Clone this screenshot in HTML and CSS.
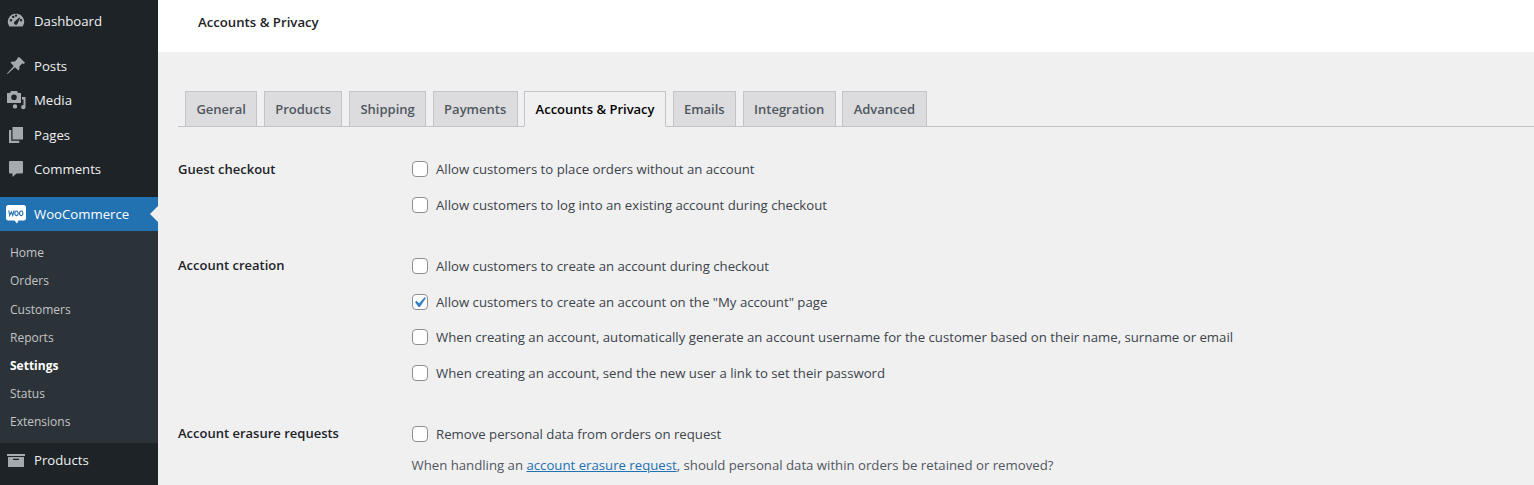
FILE: index.html
```html
<!DOCTYPE html>
<html lang="en">
<head>
    <meta charset="UTF-8">
    <meta name="viewport" content="width=device-width, initial-scale=1.0">
    <title>Accounts &amp; Privacy</title>
    <link rel="stylesheet" href="styles.css">
</head>
<body>
    <div class="page">
        <!-- Admin menu -->
        <nav class="sidebar">
            <a class="menu-item dashboard">
                <svg class="menu-icon" viewBox="0 0 20 20"><path fill-rule="evenodd" d="M9 2.800a8 8 0 0 0-6.600 12.700h13.200A8 8 0 0 0 9 2.800zM4 10.400a1.200 1.200 0 1 1 0-2.400 1.200 1.200 0 0 1 0 2.400zm2.200-3.300a1.200 1.200 0 1 1 0-2.400 1.200 1.200 0 0 1 0 2.400zM9 5.800a1.200 1.200 0 1 1 0-2.400 1.200 1.200 0 0 1 0 2.400zm1.200 7.500a1.900 1.900 0 0 1-3-2.200l5-4.600.9.600zm3.800-2.900a1.200 1.200 0 1 1 0-2.400 1.200 1.200 0 0 1 0 2.400z"/></svg>
                <span>Dashboard</span>
            </a>
            <a class="menu-item">
                <svg class="menu-icon" viewBox="0 0 20 20"><path d="M12.500 1.300l5.500 5.500-1.300 1.200-1.200-.7-3.200 3.200c.5 1.700.1 3.100-.9 4.100L8 11.200.5 18l-.5-.5L6.800 10 3.400 6.600c1-1 2.400-1.400 4.100-.9l3.200-3.200-.4-1.100z"/></svg>
                <span>Posts</span>
            </a>
            <a class="menu-item">
                <svg class="menu-icon" viewBox="0 0 20 20"><path fill-rule="evenodd" d="M0 3h3l1-2h6l1 2h3v10H0zm7 1.500a2.800 2.800 0 1 0 0 5.600 2.800 2.800 0 0 0 0-5.600z"/><path d="M15 7h3.500v10a2.200 2.200 0 1 1-2-2.100V9.500H15zM8 14.200a2.200 2.200 0 1 1 0 4.400 2.200 2.200 0 0 1 0-4.400z"/></svg>
                <span>Media</span>
            </a>
            <a class="menu-item">
                <svg class="menu-icon" viewBox="0 0 20 20"><path d="M5.500 2H16v12.500H5.500zM2 5h2.300v10.700h8V18H2z"/></svg>
                <span>Pages</span>
            </a>
            <a class="menu-item">
                <svg class="menu-icon" viewBox="0 0 20 20"><path d="M3 2h12a1 1 0 0 1 1 1v10.500a1 1 0 0 1-1 1H9.500L5.500 18v-3.500H3a1 1 0 0 1-1-1V3a1 1 0 0 1 1-1z"/></svg>
                <span>Comments</span>
            </a>
            <a class="menu-item current">
                <svg class="woo-icon" viewBox="0 0 20 20">
                    <path class="woo-bubble" d="M2.500 1h15A2.500 2.500 0 0 1 20 3.500v10.500a2.500 2.500 0 0 1-2.500 2.500h-5l-1.500 3-2.500-3H2.500A2.500 2.500 0 0 1 0 14V3.500A2.500 2.500 0 0 1 2.500 1z"/>
                    <path class="woo-mark" d="M2.800 6.500l.9 5 1.600-3.600 1.400 3.600 1.300-5M10.500 7a1.700 2.300 0 1 0 .01 0M15.200 7a1.700 2.300 0 1 0 .01 0"/>
                </svg>
                <span>WooCommerce</span>
            </a>
            <ul class="submenu">
                <li>Home</li>
                <li>Orders</li>
                <li>Customers</li>
                <li>Reports</li>
                <li class="active">Settings</li>
                <li>Status</li>
                <li>Extensions</li>
            </ul>
            <a class="menu-item products">
                <svg class="menu-icon" viewBox="0 0 20 20"><path fill-rule="evenodd" d="M0 4h18v2H0zM1 7h16v10H1zM6 8.700v1.300h6V8.700z"/></svg>
                <span>Products</span>
            </a>
        </nav>

        <div class="main">
            <header class="topbar">Accounts &amp; Privacy</header>

            <div class="content">
                <!-- Settings tabs -->
                <div class="tabs">
                    <a class="tab">General</a>
                    <a class="tab">Products</a>
                    <a class="tab">Shipping</a>
                    <a class="tab">Payments</a>
                    <a class="tab selected">Accounts &amp; Privacy</a>
                    <a class="tab">Emails</a>
                    <a class="tab">Integration</a>
                    <a class="tab">Advanced</a>
                </div>

                <section class="form-row first">
                    <h3>Guest checkout</h3>
                    <div class="options">
                        <label class="option"><span class="checkbox"></span>Allow customers to place orders without an account</label>
                        <label class="option"><span class="checkbox"></span>Allow customers to log into an existing account during checkout</label>
                    </div>
                </section>

                <section class="form-row second">
                    <h3>Account creation</h3>
                    <div class="options">
                        <label class="option"><span class="checkbox"></span>Allow customers to create an account during checkout</label>
                        <label class="option"><span class="checkbox"><svg viewBox="0 0 20 20"><path d="M14.830 4.890l1.340.940-5.810 8.380H9.020L5.780 9.670l1.340-1.250 2.570 2.400z"/></svg></span>Allow customers to create an account on the "My account" page</label>
                        <label class="option"><span class="checkbox"></span>When creating an account, automatically generate an account username for the customer based on their name, surname or email</label>
                        <label class="option"><span class="checkbox"></span>When creating an account, send the new user a link to set their password</label>
                    </div>
                </section>

                <section class="form-row">
                    <h3>Account erasure requests</h3>
                    <div class="options">
                        <label class="option"><span class="checkbox"></span>Remove personal data from orders on request</label>
                        <p class="description">When handling an <a href="#">account erasure request</a>, should personal data within orders be retained or removed?</p>
                    </div>
                </section>
            </div>
        </div>
    </div>
</body>
</html>
```

FILE: styles.css
```css
* {
    box-sizing: border-box;
}

html, body {
    margin: 0;
    height: 100%;
    overflow: hidden;
}

body {
    font-family: "Open Sans", "Noto Sans", Arial, sans-serif;
    font-size: 13.200px;
    color: #3c434a;
    background-color: #f0f0f1;
}

.page {
    display: flex;
    height: 485px;
    overflow: hidden;
}

/* Admin menu */
.sidebar {
    flex: 0 0 158px;
    padding-top: 3.800px;
    background-color: #1d2327;
}

.menu-item {
    display: flex;
    align-items: center;
    height: 34.400px;
    padding-left: 7px;
    color: #f0f0f1;
}

.menu-item span {
    margin-left: 7px;
}

.dashboard {
    margin-bottom: 10.600px;
}

.products {
    height: 33.400px;
}

.menu-icon {
    width: 20px;
    height: 20px;
    fill: #a7aaad;
}

.current {
    position: relative;
    margin-top: 10.600px;
    background-color: #2271b1;
    color: #fff;
}

.current::after {
    content: "";
    position: absolute;
    right: 0;
    top: 9px;
    border: 8px solid transparent;
    border-left: 0;
    border-right-color: #f0f0f1;
}

.woo-icon {
    width: 20px;
    height: 20px;
    margin-left: -1px;
    margin-right: 1px;
}

.woo-bubble {
    fill: #fff;
}

.woo-mark {
    fill: none;
    stroke: #2271b1;
    stroke-width: 1.100;
}

.submenu {
    list-style: none;
    margin: 0;
    padding: 8px 0 7px;
    background-color: #2c3338;
    font-size: 12px;
    color: #c3c4c7;
}

.submenu li {
    height: 28.170px;
    line-height: 28.170px;
    padding-left: 10px;
}

.submenu .active {
    color: #fff;
    font-weight: 700;
}

/* Main area */
.main {
    flex: 1;
    min-width: 0;
}

.topbar {
    height: 52px;
    padding-left: 40px;
    line-height: 44px;
    background-color: #fff;
    color: #1d2327;
    font-weight: 600;
}

.content {
    padding: 39px 0 0 20px;
}

.tabs {
    display: flex;
    gap: 6.600px;
    height: 36px;
    padding-left: 7px;
    border-bottom: 1px solid #c3c4c7;
    font-size: 13px;
}

.tab {
    height: 36px;
    padding: 0 10.400px;
    line-height: 35px;
    border: 1px solid #c3c4c7;
    background-color: #dcdcde;
    color: #50575e;
    font-weight: 600;
}

.tab.selected {
    border-bottom-color: #f0f0f1;
    background-color: #f0f0f1;
    color: #000;
}

.form-row {
    display: grid;
    grid-template-columns: 233.500px 1fr;
    margin-top: 25.300px;
}

.form-row.first {
    margin-top: 24px;
}

.form-row.second {
    margin-top: 25.700px;
}

.form-row h3 {
    margin: 0;
    font-size: 13px;
    font-weight: 600;
    line-height: 35px;
    color: #1d2327;
}

.form-row.first h3 {
    line-height: 36px;
}

.option {
    display: flex;
    align-items: center;
    height: 35.700px;
}

.checkbox {
    display: block;
    width: 16px;
    height: 16px;
    margin-right: 8.500px;
    border: 1px solid #8c8f94;
    border-radius: 4px;
    background-color: #fff;
}

.checkbox svg {
    display: block;
    width: 21px;
    height: 21px;
    margin: -3px 0 0 -4px;
    fill: #3582c4;
}

.description {
    margin: 0;
    line-height: 26px;
    color: #50575e;
}

.description a {
    color: #2271b1;
    text-decoration: underline;
}
```
